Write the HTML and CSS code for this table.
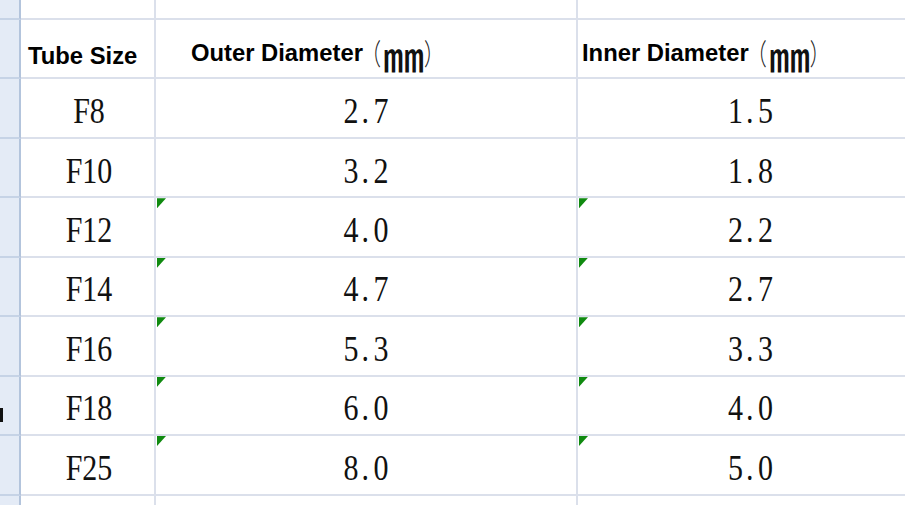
FILE: index.html
```html
<!DOCTYPE html>
<html>
<head>
<meta charset="utf-8">
<link rel="stylesheet" href="styles.css">
</head>
<body>
<div class="sheet">
  <!-- top strip -->
  <div class="rh"></div><div class="c"></div><div class="c"></div><div class="c last"></div>
  <!-- header -->
  <div class="rh"></div>
  <div class="c hd hd1">Tube Size</div>
  <div class="c hd hd2">Outer Diameter<span class="paren pl">（</span><span class="mm">㎜</span><span class="paren pr">）</span></div>
  <div class="c hd hd3 last">Inner Diameter<span class="paren pl">（</span><span class="mm">㎜</span><span class="paren pr">）</span></div>
  <!-- data -->
  <div class="rh"></div>
  <div class="c v v1"><span class="num">F8</span></div>
  <div class="c v v2"><span class="num">2<span class="dot">.</span>7</span></div>
  <div class="c v v3 last"><span class="num">1<span class="dot">.</span>5</span></div>

  <div class="rh"></div>
  <div class="c v v1"><span class="num">F10</span></div>
  <div class="c v v2"><span class="num">3<span class="dot">.</span>2</span></div>
  <div class="c v v3 last"><span class="num">1<span class="dot">.</span>8</span></div>

  <div class="rh"></div>
  <div class="c v v1"><span class="num">F12</span></div>
  <div class="c v v2 flag"><span class="num">4<span class="dot">.</span>0</span></div>
  <div class="c v v3 last flag"><span class="num">2<span class="dot">.</span>2</span></div>

  <div class="rh"></div>
  <div class="c v v1"><span class="num">F14</span></div>
  <div class="c v v2 flag"><span class="num">4<span class="dot">.</span>7</span></div>
  <div class="c v v3 last flag"><span class="num">2<span class="dot">.</span>7</span></div>

  <div class="rh"></div>
  <div class="c v v1"><span class="num">F16</span></div>
  <div class="c v v2 flag"><span class="num">5<span class="dot">.</span>3</span></div>
  <div class="c v v3 last flag"><span class="num">3<span class="dot">.</span>3</span></div>

  <div class="rh"><div class="rownum-frag"></div></div>
  <div class="c v v1"><span class="num">F18</span></div>
  <div class="c v v2 flag"><span class="num">6<span class="dot">.</span>0</span></div>
  <div class="c v v3 last flag"><span class="num">4<span class="dot">.</span>0</span></div>

  <div class="rh"></div>
  <div class="c v v1"><span class="num">F25</span></div>
  <div class="c v v2 flag"><span class="num">8<span class="dot">.</span>0</span></div>
  <div class="c v v3 last flag"><span class="num">5<span class="dot">.</span>0</span></div>
  <!-- bottom strip -->
  <div class="rh nob"></div><div class="c nob"></div><div class="c nob"></div><div class="c last nob"></div>
</div>
</body>
</html>
```
FILE: styles.css
```css
* { box-sizing: border-box; }
html, body { margin: 0; padding: 0; background: #ffffff; }
body { width: 906px; height: 505px; overflow: hidden; }

.sheet {
  display: grid;
  grid-template-columns: 21px 135px 422px 327px;
  grid-template-rows: 20px repeat(8, 59.44px) 1fr;
  height: 505px;
  font-family: "Liberation Sans", Arial, sans-serif;
  color: #000;
}

.rh {
  background: #e4ebf6;
  border-right: 2px solid #b3c4dc;
  border-bottom: 2px solid #c6d3e6;
  display: flex;
  align-items: center;
}

.c {
  position: relative;
  border-right: 2px solid #dbe0eb;
  border-bottom: 2px solid #dbe0eb;
}
.c.last { border-right: none; }
.nob { border-bottom: none; }

.hd {
  display: flex;
  align-items: center;
  padding-top: 8px;
  font-weight: bold;
  font-size: 23.8px;
  white-space: nowrap;
}
.hd1 { padding-left: 7px; padding-top: 14px; }
.hd2 { padding-left: 35px; }
.hd3 { padding-left: 4px; }

.paren {
  font-family: "Noto Sans CJK SC", "Noto Sans CJK JP", sans-serif;
  font-weight: 300;
  font-size: 20px;
  line-height: 1;
  display: inline-block;
  transform: scaleY(1.45);
  color: #222;
}
.pl { margin-left: -2px; }
.pr { margin-left: 4px; }

.mm {
  font-family: "Noto Sans CJK SC", "Noto Sans CJK JP", sans-serif;
  font-weight: 500;
  font-size: 33px;
  line-height: 1;
  display: inline-block;
  margin-top: 6px;
  margin-left: 6px;
  transform: scale(1.25, 1.2);
  color: #111;
}

.v {
  display: flex;
  align-items: center;
  justify-content: center;
  padding-top: 6px;
}
.v1 { padding-left: 3px; }
.v3 { padding-left: 18px; }

.num {
  display: inline-block;
  font-family: "Liberation Serif", "Times New Roman", serif;
  font-size: 30px;
  line-height: 1;
  transform: scaleY(1.2);
  color: #111;
}
.dot {
  display: inline-block;
  width: 15px;
  text-align: left;
  padding-left: 3px;
}

.flag::before {
  content: "";
  position: absolute;
  left: 1px;
  top: 0;
  width: 9px;
  height: 10px;
  background: #108a10;
  clip-path: polygon(0 0, 100% 0, 0 100%);
}

.rownum-frag {
  width: 3px;
  height: 14px;
  background: #111;
  margin-top: 19px;
}
```
